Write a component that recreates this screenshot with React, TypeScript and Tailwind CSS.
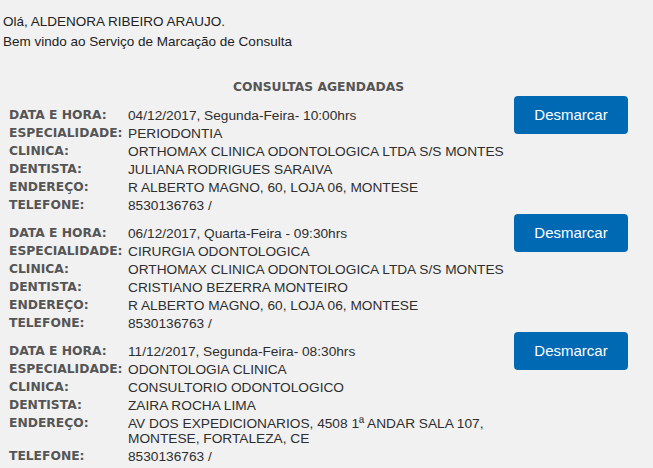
const consultas = [
  {
    data: "04/12/2017, Segunda-Feira- 10:00hrs",
    especialidade: "PERIODONTIA",
    clinica: "ORTHOMAX CLINICA ODONTOLOGICA LTDA S/S MONTES",
    dentista: "JULIANA RODRIGUES SARAIVA",
    endereco: "R ALBERTO MAGNO, 60, LOJA 06, MONTESE",
    telefone: "8530136763 /",
  },
  {
    data: "06/12/2017, Quarta-Feira - 09:30hrs",
    especialidade: "CIRURGIA ODONTOLOGICA",
    clinica: "ORTHOMAX CLINICA ODONTOLOGICA LTDA S/S MONTES",
    dentista: "CRISTIANO BEZERRA MONTEIRO",
    endereco: "R ALBERTO MAGNO, 60, LOJA 06, MONTESE",
    telefone: "8530136763 /",
  },
  {
    data: "11/12/2017, Segunda-Feira- 08:30hrs",
    especialidade: "ODONTOLOGIA CLINICA",
    clinica: "CONSULTORIO ODONTOLOGICO",
    dentista: "ZAIRA ROCHA LIMA",
    endereco: "AV DOS EXPEDICIONARIOS, 4508 1ª ANDAR SALA 107, MONTESE, FORTALEZA, CE",
    telefone: "8530136763 /",
  },
];

function Row({ label, value }: { label: string; value: string }) {
  return (
    <div className="flex items-start">
      <div className="w-[119px] shrink-0 py-[1.5px] font-['DejaVu_Sans',Verdana,sans-serif] text-[12.3px] leading-[15px] font-bold text-[#555]">
        {label}
      </div>
      <div className="w-[382px] shrink-0 py-[1.5px] text-[13.7px] leading-[15px] text-[#2e2e2e]">{value}</div>
    </div>
  );
}

export default function App() {
  return (
    <div className="min-h-screen w-[653px] h-[468px] overflow-hidden bg-[#f1f1f1] font-['Liberation_Sans',Arial,sans-serif]">
      <div className="pl-[3px] pt-[12px] text-[13.5px] leading-[20px] text-[#222]">
        <div>Olá, ALDENORA RIBEIRO ARAUJO.</div>
        <div>Bem vindo ao Serviço de Marcação de Consulta</div>
      </div>

      <div className="w-[619px] ml-[9px] mt-[28px]">
        <div className="text-center font-['DejaVu_Sans',Verdana,sans-serif] text-[12.3px] leading-[15px] font-bold text-[#555]">
          CONSULTAS AGENDADAS
        </div>
        <div className="mt-[11px] flex flex-col gap-[10px]">
          {consultas.map((c, i) => (
            <div key={i} className="flex items-start">
              <div className="flex flex-col">
                <Row label="DATA E HORA:" value={c.data} />
                <Row label="ESPECIALIDADE:" value={c.especialidade} />
                <Row label="CLINICA:" value={c.clinica} />
                <Row label="DENTISTA:" value={c.dentista} />
                <Row label="ENDEREÇO:" value={c.endereco} />
                <Row label="TELEFONE:" value={c.telefone} />
              </div>
              <button className="ml-auto mt-[-10px] w-[114px] h-[38px] rounded-[4px] bg-[#0069b4] text-white text-[15px]">
                Desmarcar
              </button>
            </div>
          ))}
        </div>
      </div>
    </div>
  );
}
